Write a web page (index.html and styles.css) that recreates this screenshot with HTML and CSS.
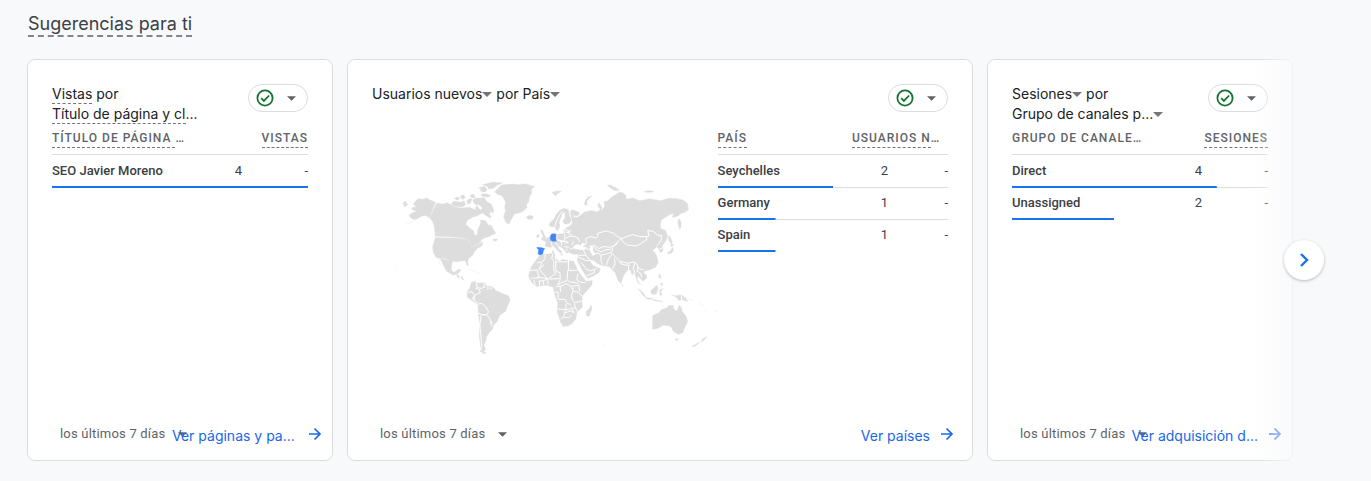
FILE: index.html
```html
<!DOCTYPE html>
<html lang="es">
<head>
<meta charset="utf-8">
<meta name="viewport" content="width=device-width, initial-scale=1">
<title>Sugerencias para ti</title>
<link rel="stylesheet" href="styles.css">
</head>
<body>
<svg class="sprite" aria-hidden="true">
  <symbol id="check" viewBox="0 0 18 18"><circle cx="9" cy="9" r="7.6" fill="none" stroke="#137333" stroke-width="1.8"/><path d="M5.2 9.2l2.7 2.7 5.2-5.4" fill="none" stroke="#137333" stroke-width="1.8"/></symbol>
  <symbol id="caret" viewBox="0 0 10 5"><path d="M0 0h10L5 5z" fill="currentColor"/></symbol>
  <symbol id="arrow" viewBox="0 0 14 14"><path d="M1 7h11M6.5 1.5L12 7l-5.500 5.500" fill="none" stroke="currentColor" stroke-width="1.700"/></symbol>
</svg>
<main class="page">
  <h1 class="heading"><span class="term-strong">Sugerencias para ti</span></h1>
  <div class="carousel">
    <section class="card">
      <header class="card-head">
        <h2 class="card-title"><span class="term">Vistas</span> por<br><span class="term">Título de página y cl</span>...</h2>
        <button class="status" type="button" aria-label="Calidad de los datos"><svg class="check"><use href="#check"/></svg><svg class="caret"><use href="#caret"/></svg></button>
      </header>
      <div class="card-body">
        <table class="data">
          <colgroup><col><col class="col-value"><col class="col-change"></colgroup>
          <thead><tr><th scope="col"><span class="term">TÍTULO DE PÁGINA </span>…</th><th class="metric" scope="colgroup" colspan="2"><span class="term">VISTAS</span></th></tr></thead>
          <tbody><tr style="--share:100%"><th scope="row">SEO Javier Moreno</th><td>4</td><td>-</td></tr></tbody>
        </table>
      </div>
      <footer class="card-foot">
        <button class="range" type="button">los últimos 7 días<svg class="caret"><use href="#caret"/></svg></button>
        <a class="more" href="#paginas"><span>Ver páginas y pa...</span><svg class="arrow"><use href="#arrow"/></svg></a>
      </footer>
    </section>

    <section class="card card-wide">
      <header class="card-head">
        <h2 class="card-title"><button class="pick" type="button">Usuarios nuevos<svg class="caret"><use href="#caret"/></svg></button> por <button class="pick" type="button">País<svg class="caret"><use href="#caret"/></svg></button></h2>
        <button class="status" type="button" aria-label="Calidad de los datos"><svg class="check"><use href="#check"/></svg><svg class="caret"><use href="#caret"/></svg></button>
      </header>
      <div class="card-body split">
        <svg class="map" viewBox="-54 0 1038 570" role="img" aria-label="Usuarios nuevos por país">
          <g class="land">
            <!-- North America -->
            <path d="M76 95L84 86 100 88 110 84 122 91 137 97 118 144 108 137 94 139 78 149 66 147 57 136 70 127 79 124 65 118 68 112 78 111 70 101zM39 98l8-5 2 7 6 4-7 3-4 5z"/>
            <path d="M140 100L160 102 172 98 190 108 210 114 240 112 256 120 260 106 272 122 276 130 262 138 248 142 232 152 228 164 244 178 250 182 254 196 262 194 264 178 272 162 272 150 286 152 296 166 304 166 312 182 318 190 298 200 280 206 268 216 278 214 264 222 246 231 242 218 234 207 210 203 160 200 136 199 133 170 128 155 119 144z"/>
            <path d="M136 203L210 205 234 209 243 222 246 233 268 222 280 218 276 228 262 236 252 248 248 256 236 266 233 276 236 288 230 284 226 272 212 273 200 276 190 273 184 284 176 272 166 266 148 265 138 262 130 248 128 232 132 216z"/>
            <path d="M151 266L176 272 186 284 184 300 192 308 206 298 214 300 204 312 190 316 170 304 162 290z"/>
            <path d="M184 101l8-8 13 2 9 1 9-4 4 13-11 6-17-1-9-3zM193 85l10-4 7 4-8 6zM210 79l11-4 6 7-9 7zM230 92l8-6 8 2-4 12-8 3zM240 75l12-2 4 8-11 4zM248 91l9-7 17 1 8-4 9 14 13 7 8 20-4 9-5-8-5 10 7 7-6 4-19-13-11-8 9-9-10-9-13-2zM266 54l18-5 8 10-7 8-16-4 7-4zM278 44l29-7 32 1-17 8-10 8-15 3-4-7zM274 72l18 0 12 6-11 3-16-2zM201 314l8 5-2 7-6-6zM213 318l6 5 2 8-6-4zM310 207l13 0-2 5-9 2z"/>
            <path d="M314 66l9-9 11-12 35-3 17 2 22-3 16 6 11 2-10 8 1 13-7 10-2 16-7 7 2 10-15 13-23 6-10 17-6 13-10-4-7-19 7-17-4-8 3-18-10-19-14-4zM409 141l11-5 11 3-3 8-12 2z"/>
            <!-- South America -->
            <path d="M244 338L256 334 264 340 284 338 290 348 308 350 318 362 340 372 356 378 361 390 354 406 348 424 330 436 322 454 312 466 308 478 298 488 290 500 288 514 282 526 288 540 280 544 272 532 268 500 270 465 266 432 264 404 246 392 232 382 232 366 240 354z"/>
            <path d="M273 540l16 10-5 2-13-7z"/>
            <!-- Scandinavia -->
            <path d="M478 163L484 155 492 148 500 132 510 121 522 115 530 117 527 124 519 128 512 145 508 158 510 170 503 183 498 178 496 168 489 171 481 169zM524 122L532 117 538 122 541 140 545 150 540 160 526 163 519 155 526 143z"/>
            <!-- Mainland Europe and Asia -->
            <path d="M544 120L552 121 570 128 566 136 556 138 550 134 552 142 563 142 575 134 585 126 605 122 622 126 632 118 624 108 628 98 636 112 634 124 645 110 643 95 655 92 665 82 680 73 690 66 702 70 708 76 710 88 730 84 750 92 780 86 812 92 838 85 862 86 880 90 893 100 897 118 888 126 876 130 862 140 848 143 852 130 838 135 815 150 812 165 813 176 828 182 834 200 828 214 820 224 818 230 820 244 812 248 806 236 800 230 794 238 788 240 796 248 802 262 806 278 798 292 780 300 768 302 762 308 772 318 770 326 760 334 750 324 744 318 742 330 752 344 744 338 738 320 734 306 728 316 722 300 714 300 702 316 694 342 684 330 676 308 668 300 658 290 636 286 625 282 612 272 600 270 608 285 620 292 632 296 628 308 612 318 594 326 586 315 572 290 562 272 564 262 566 252 552 254 538 248 538 240 550 236 572 240 586 240 592 232 580 230 590 222 578 218 572 226 564 222 554 226 550 232 540 236 536 248 530 250 524 240 512 230 502 226 508 238 518 246 512 250 502 240 492 228 482 233 466 230 468 216 458 210 466 207 476 202 484 193 498 192 512 192 524 190 522 180 532 172 541 168 548 158 546 145 541 130z"/>
            <!-- Islands around Eurasia -->
            <path d="M454 205l6-4-3-9-5-8 5-5 5 12 6 12-4 6-8 1zM441 196l7-4 1 8-8 4zM487 67l14-4 14 1-12 7-6 8zM584 103l3-13 8-9 13-3-9 7-8 9 2 10-6 2zM653 45l10 1 20 10 5 7-15-2-11-7zM762 65l14-3 16 1-5 4-19 0zM868 146l6 10 0 16-4 6-6-20zM838 196l6 10 4 12-4 3-8-13zM846 220l6 4-4 6-6-3zM848 232l4 8-4 8-10 4-6-2 12-8zM696 343l4 4-1 5zM512 252l7 1-3 4zM488 242l4 1 0 8-4-1z"/>
            <!-- Africa and Madagascar -->
            <path d="M438 272L450 256 462 254 490 250 496 252 494 266 510 274 518 268 534 272 552 274 560 292 568 308 584 328 588 334 608 332 606 346 592 362 578 378 576 392 578 412 562 426 558 448 546 462 536 468 520 470 512 456 502 424 504 400 498 384 492 364 490 352 472 346 440 350 424 336 416 318 424 292zM604 406l3 10-9 24-8-2-1-13 10-9z"/>
            <!-- Oceania -->
            <path d="M789 437L806 430 815 420 831 414 838 406 852 408 850 416 862 424 869 406 875 412 878 426 890 440 894 456 886 472 880 488 866 494 852 486 846 474 838 468 820 466 804 476 788 478zM856 507l10 0-5 7zM952 500l-8 11-9 6 3-9zM933 516l-19 15-7-2zM744 355l16 13 9 14-6-2zM769 383l21 3-3 3-20-3zM783 363l18-17 4 9-5 18-14 0zM810 359l11-3-7 9 3 11-6 0zM845 375l13 3 17-3 14 10 5 11-16-6-10 2-7-10zM809 311l5 8-2 8-5-7zM815 339l4 2-1 6-6-4zM790 389l30 5-3 2-27-4z"/>
          </g>
          <!-- Inland seas -->
          <g class="water"><path d="M600 226l10 2-1 10 8 16-8 4-8-14z"/></g>
          <!-- Frontiers -->
          <g class="borders">
            <path d="M258 336l3 16 14 4 12-8M281 338l3 16M294 349l0 11M303 350l0 9M233 367l14-1 7 11-8 13M254 377l17-9-2-9-12-3M254 377l-2 14 14 12 10-3 14 14 6 12-6 8-12 2M266 430l10 4 12 0 10 8 4 12 8 8M274 436l-4 30 4 40 2 28M302 454l2 12 8 6"/>
            <path d="M496 168l3-12 9-20 9-12M538 121l3 18M522 178l14 4M524 186l14 2 6-8M524 192l2 14-4 8-16-4M536 182l2 10 8 4M526 206l12-6 12-2 14 6 6 12M502 192l-2 20M490 214l14-4 12 6 12-2 8 6M484 214l4 18M496 220l10 4M514 216l2 12M524 222l12-8M524 230l14 2M530 236l2 6M552 214l-6 12"/>
            <path d="M590 222L588 206 602 200 618 204 624 200 624 190 650 183 672 190 680 198 694 206 684 216 680 224 662 232 640 230 628 236 612 226 604 232"/>
            <path d="M694 206L712 200 730 194 750 200 770 200 772 208 752 222 740 228 714 226 700 216zM770 200L778 198 774 182 790 184 804 196 816 196 814 212 802 228M809 238l9-4"/>
            <path d="M684 216L668 232 668 242 664 248 678 262 690 274 716 280 730 276 740 280 746 296 762 300"/>
            <path d="M580 238L586 252 594 264 602 270M612 252L626 250 634 256 634 272 638 284M634 256L650 252 664 248M650 286L656 268 666 254M668 298L676 282 674 266M566 258L576 256 588 256M566 262L576 266 588 272 602 272M574 278L592 300 606 302 620 296M590 318L614 308 614 300M612 230L620 240 634 246 648 240 664 238M590 236L604 240M690 274L694 282 718 288M718 280L716 300M736 280L730 296 736 308M746 290L742 304 754 312 756 322"/>
            <path d="M442 279l16-3 8-10 0-12M489 252l-3 13 6 9 0 28 6 9-24 17-26-30 15-14M456 279l-8 19M421 302l21-2 6 24-24 1M443 322l30 4M474 326l-10 6-16 2M473 327l2 17M498 269l0 34 13 6 0 20-5 13M536 270l0 30M498 276l36 0M534 302l31-1M534 302l-2 27 7 7 27 4M565 312l-4 18 12 8 14 0M479 328l29-2M502 345l14-7 16-6M498 351l13-3 1 19M512 350l16-8 12 4 8 12M494 366l12 2-2 18M504 388l23 1 5 12 12 3M550 353l-1 12-4 12 3 14 8 7M545 350l22-4M570 365l-3-20M550 364l15 3 12 12M502 418l35 1 10-6M528 402l1 17M527 419l-5 20-8 10M524 430l18-7 11 6M522 442l14 2 10-8M553 400l4 12 4 12M556 413l-10 6 8 8M556 398l20-4M432 330l4 14M448 332l2 16M460 334l2 12"/>
            <path d="M876 376l0 16"/>
          </g>
          <g class="active">
            <path d="M484 194l6-3 9 2-1 11 2 9-9 2-8-3-2-8z"/>
            <path d="M441 232l12 1 12 3-4 6-2 10-7 3-7-2 1-15-4-2z"/>
          </g>
          <g class="islets"><path d="M47 163l17-6 15-6M13 293l6 10M640 527l6 1M892 386l20 6M926 398l18 12M946 423l6 4M974 426l7-2M238 299l20 6M262 308l10 2M146 268l6 22M418 339l-4-4M808 324l4 4"/></g>
        </svg>
        <table class="data">
          <colgroup><col><col class="col-value"><col class="col-change"></colgroup>
          <thead><tr><th scope="col"><span class="term">PAÍS</span></th><th class="metric" scope="colgroup" colspan="2"><span class="clip"><span class="term">USUARIOS N</span>…</span></th></tr></thead>
          <tbody>
            <tr style="--share:50%"><th scope="row">Seychelles</th><td>2</td><td>-</td></tr>
            <tr style="--share:25%"><th scope="row">Germany</th><td>1</td><td>-</td></tr>
            <tr style="--share:25%"><th scope="row">Spain</th><td>1</td><td>-</td></tr>
          </tbody>
        </table>
      </div>
      <footer class="card-foot">
        <button class="range" type="button">los últimos 7 días<svg class="caret"><use href="#caret"/></svg></button>
        <a class="more" href="#paises"><span>Ver países</span><svg class="arrow"><use href="#arrow"/></svg></a>
      </footer>
    </section>

    <section class="card">
      <header class="card-head">
        <h2 class="card-title"><button class="pick" type="button">Sesiones<svg class="caret"><use href="#caret"/></svg></button> por<br><button class="pick" type="button">Grupo de canales p...<svg class="caret"><use href="#caret"/></svg></button></h2>
        <button class="status" type="button" aria-label="Calidad de los datos"><svg class="check"><use href="#check"/></svg><svg class="caret"><use href="#caret"/></svg></button>
      </header>
      <div class="card-body">
        <table class="data">
          <colgroup><col><col class="col-value"><col class="col-change"></colgroup>
          <thead><tr><th scope="col">GRUPO DE CANALE…</th><th class="metric" scope="colgroup" colspan="2"><span class="term">SESIONES</span></th></tr></thead>
          <tbody>
            <tr style="--share:80%"><th scope="row">Direct</th><td>4</td><td>-</td></tr>
            <tr style="--share:40%"><th scope="row">Unassigned</th><td>2</td><td>-</td></tr>
          </tbody>
        </table>
      </div>
      <footer class="card-foot">
        <button class="range" type="button">los últimos 7 días<svg class="caret"><use href="#caret"/></svg></button>
        <a class="more" href="#adquisicion"><span>Ver adquisición d...</span><svg class="arrow"><use href="#arrow"/></svg></a>
      </footer>
    </section>
    <div class="fade"></div>
    <button class="next" type="button" aria-label="Siguiente"><svg viewBox="0 0 24 24"><path d="M9 6l6 6-6 6" fill="none" stroke="#1a73e8" stroke-width="2.400"/></svg></button>
  </div>
</main>
</body>
</html>
```
FILE: styles.css
```css
* { box-sizing: border-box; }
body {
  margin: 0;
  background: #f8f9fb;
  color: #3c4043;
  font-family: Roboto, "Liberation Sans", sans-serif;
  font-size: 13px;
  line-height: 20px;
}
button { border: 0; padding: 0; background: none; font: inherit; color: inherit; cursor: pointer; }
svg { display: block; flex: none; }
.sprite { position: absolute; width: 0; height: 0; }
.page { padding: 12px 78px 20px 27px; }
.heading {
  margin: 0 0 22px;
  padding-left: 1px;
  font-family: Inter, sans-serif;
  font-size: 18px;
  font-weight: 400;
  line-height: 24px;
}
.term-strong { display: inline-block; border-bottom: 2px dashed #80868b; line-height: 23px; }
.term { display: inline-block; white-space: pre; border-bottom: 1px dashed #757575; line-height: 18px; }

.carousel { position: relative; display: grid; grid-template-columns: repeat(4, minmax(0, 1fr)); gap: 14px; }
.card {
  display: flex;
  flex-direction: column;
  min-height: 402px;
  padding: 24px 24px 14px;
  border: 1px solid #dadce0;
  border-radius: 8px;
  background: #fff;
}
.card-wide { grid-column: span 2; }
.card-head { display: flex; justify-content: space-between; min-height: 40px; }
.card-title {
  margin: 0;
  color: #202124;
  font-family: Inter, sans-serif;
  font-size: 14px;
  font-weight: 400;
  line-height: 20px;
  white-space: nowrap;
}
.caret { width: 10px; height: 5px; color: #5f6368; }
.pick .caret { display: inline-block; margin-bottom: 2px; vertical-align: middle; color: #757575; }
.status {
  display: flex;
  align-items: center;
  justify-content: space-between;
  width: 60px;
  height: 28px;
  padding: 0 11px 0 7px;
  border: 1px solid #dadce0;
  border-radius: 14px;
}
.status .caret { width: 9px; }
.check { width: 18px; height: 18px; }

.card-body { flex: 1; }
.split { display: grid; grid-template-columns: 3fr 2fr; align-items: start; }
.map { width: 100%; margin-top: 46px; }
.land { fill: #ddd; stroke: #ddd; stroke-width: 1; stroke-linejoin: round; }
.water { fill: #fff; }
.borders { fill: none; stroke: #fff; stroke-width: 3; stroke-linejoin: round; }
.active { fill: #4285f4; stroke: #4285f4; stroke-width: 1; }
.islets { fill: none; stroke: #eee; stroke-width: 2; }

.data { width: 100%; border-spacing: 0; table-layout: fixed; white-space: nowrap; }
.data th, .data td { padding: 0 0 2px; }
.col-value { width: 46px; }
.col-change { width: 66px; }
.split .col-change { width: 60px; }
.split .col-value { width: 36px; }
.data thead th {
  height: 31px;
  border-bottom: 1px solid #dadce0;
  color: #5f6368;
  font-size: 12px;
  font-weight: 500;
  letter-spacing: 1px;
  text-align: left;
}
.data thead .metric { text-align: right; }
.data .clip { display: block; text-align: left; }
.data tbody tr {
  height: 32px;
  background: linear-gradient(#1a73e8, #1a73e8) left bottom / var(--share) 2px no-repeat, linear-gradient(#dadce0, #dadce0) left bottom / 100% 1px no-repeat;
}
.data tbody tr:first-child { height: 33px; }
.data tbody tr:last-child { background: linear-gradient(#1a73e8, #1a73e8) left bottom / var(--share) 2px no-repeat; }
.data tbody th { font-weight: 500; text-align: left; }
.data tbody td { text-align: right; }

.card-foot { display: flex; align-items: center; justify-content: space-between; margin-right: -14px; padding-left: 8px; }
.card-wide .card-foot { margin-right: -6px; }
.range { display: flex; align-items: center; gap: 13px; min-width: 0; color: #5f6368; white-space: nowrap; letter-spacing: 0.2px; }
.range .caret { width: 9px; }
.more {
  display: flex;
  flex: none;
  align-items: center;
  justify-content: space-between;
  gap: 10px;
  min-width: 150px;
  color: #1a67e8;
  font-family: Inter, sans-serif;
  font-size: 14px;
  line-height: 24px;
  text-decoration: none;
}
.more span { padding-top: 2px; margin-bottom: -2px; }
.card-wide .more { min-width: 0; }
.arrow { width: 14px; height: 14px; }
.fade { position: absolute; inset: 0 0 0 auto; width: 40px; background: linear-gradient(90deg, rgba(248, 249, 251, 0), rgba(248, 249, 251, 0.8)); pointer-events: none; }
.next {
  position: absolute;
  top: 50%;
  right: -31px;
  display: grid;
  place-items: center;
  width: 40px;
  height: 40px;
  border-radius: 50%;
  background: #fff;
  box-shadow: 0 1px 3px rgba(60, 64, 67, 0.35);
  transform: translateY(-50%);
}
.next svg { width: 24px; height: 24px; }
```
